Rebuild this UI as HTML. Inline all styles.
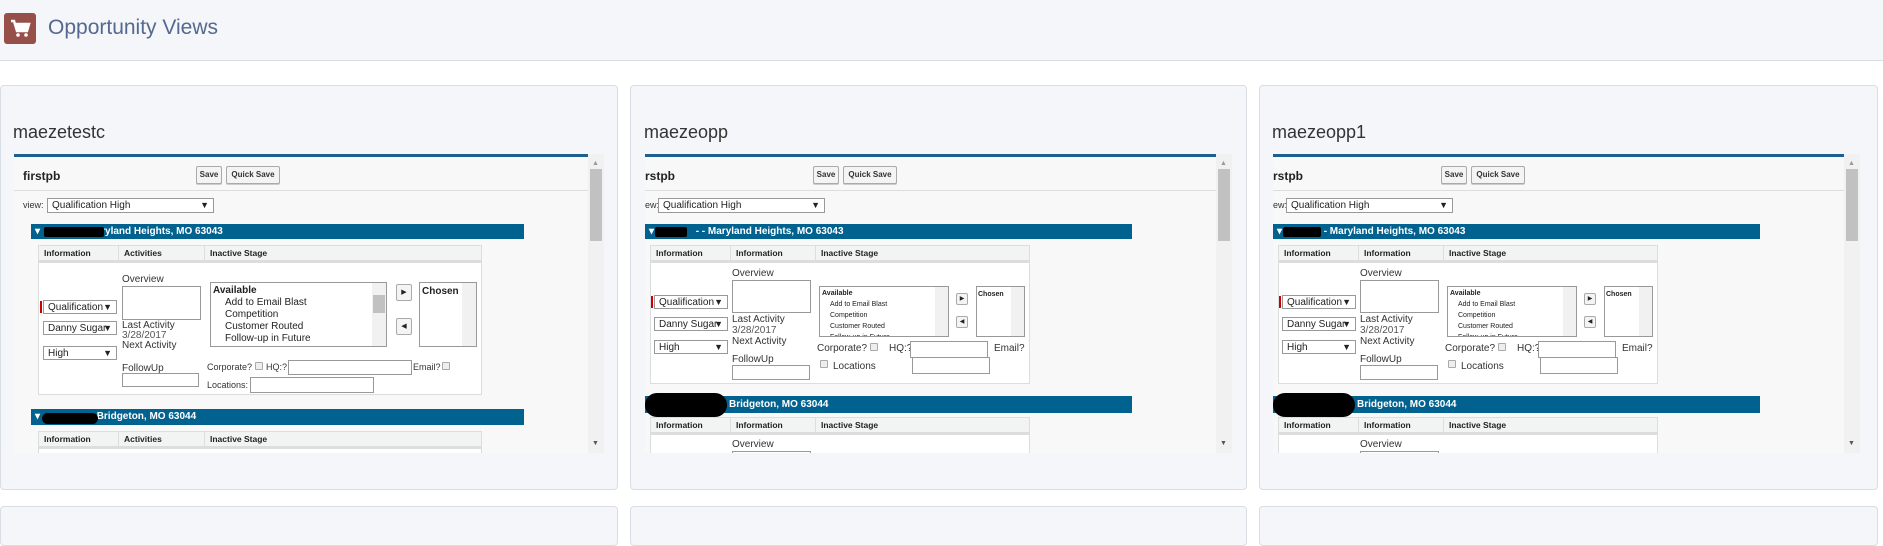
<!DOCTYPE html>
<html><head><meta charset="utf-8"><style>
*{box-sizing:border-box;margin:0;padding:0}
body{width:1883px;height:530px;background:#fff;position:relative;overflow:hidden;font-family:"Liberation Sans",sans-serif;color:#222}
.a{position:absolute}
.hdr{left:0;top:0;width:1883px;height:61px;background:#f4f6f9;border-bottom:1px solid #d8dde6}
.card{background:#f4f6f9;border:1px solid #d8dde6;border-radius:4px}
.ctitle{font-size:18px;color:#333}
.panel{background:#f8f8f8;border-top:3px solid #1d5f8e;overflow:hidden}
.sb{background:#f1f1f1}
.thumb{background:#c1c1c1}
.btn{border:1px solid #aaa;background:#f4f4f4;font-size:8px;font-weight:bold;border-radius:2px;text-align:center;line-height:16px;color:#333;box-shadow:0 1px 0 #ccc}
.bar{background:#02628f;color:#fff;font-weight:bold;font-size:10px;line-height:15px;padding-left:14px;white-space:nowrap}
.tbl{background:#fff;border:1px solid #ddd}
.th{background:#f2f3f3;border-bottom:3px solid #ddd;height:17px}
.thc{font-size:8.5px;font-weight:bold;line-height:14px;padding-left:5px;border-right:1px solid #ddd;height:14px}
.sel{background:#fff;border:1px solid #999;font-size:10px;line-height:13px;padding-left:4px;white-space:nowrap;overflow:hidden}
.sel:after{content:"▼";position:absolute;right:4px;top:0;font-size:9px}
.lbl{font-size:10px;white-space:nowrap;color:#333;line-height:11px}
.box{background:#fff;border:1px solid #999}
.lb{background:#fff;border:1px solid #999;font-size:10px;line-height:13px;overflow:hidden;white-space:nowrap}
.ab{border:1px solid #aaa;background:#f4f4f4;border-radius:2px;font-size:7px;text-align:center}
.cb{width:8px;height:8px;border:1px solid #aaa;background:#eee;border-radius:1px}
.blk{background:#000;border-radius:6px}
</style></head><body>
<div class="a hdr"></div>
<div class="a" style="left:4px;top:13px;width:32px;height:31px;background:#975049;border-radius:3px">
<svg width="32" height="31" viewBox="0 0 32 31"><path d="M7 8h3l3 10h10l2-7H12" fill="none" stroke="#fff" stroke-width="2.5"/><rect x="12" y="11" width="12" height="6" fill="#fff"/><circle cx="14" cy="22" r="1.8" fill="#fff"/><circle cx="22" cy="22" r="1.8" fill="#fff"/></svg></div>
<div class="a" style="left:48px;top:16px;font-size:21px;color:#54698d">Opportunity Views</div>

<div class="a card" style="left:0;top:85px;width:618px;height:405px"></div>
<div class="a card" style="left:630px;top:85px;width:617px;height:405px"></div>
<div class="a card" style="left:1259px;top:85px;width:619px;height:405px"></div>
<div class="a card" style="left:0;top:506px;width:618px;height:40px"></div>
<div class="a card" style="left:630px;top:506px;width:617px;height:40px"></div>
<div class="a card" style="left:1259px;top:506px;width:619px;height:40px"></div>

<div class="a ctitle" style="left:13px;top:122px">maezetestc</div>
<div class="a ctitle" style="left:644px;top:122px">maezeopp</div>
<div class="a ctitle" style="left:1272px;top:122px">maezeopp1</div>

<!-- CARD 1 -->
<div class="a panel" style="left:14px;top:154px;width:574px;height:299px">
 <div class="a" style="left:9px;top:12px;font-size:12px;font-weight:bold">firstpb</div>
 <div class="a btn" style="left:182px;top:9px;width:26px;height:18px">Save</div>
 <div class="a btn" style="left:212px;top:9px;width:54px;height:18px">Quick Save</div>
 <div class="a" style="left:0;top:33px;width:574px;height:1px;background:#ddd"></div>
 <div class="a lbl" style="left:9px;top:43px;font-size:9px">view:</div>
 <div class="a sel" style="left:33px;top:41px;width:167px;height:15px">Qualification High</div>
 <div class="a bar" style="left:17px;top:67px;width:493px;height:15px;padding-left:4px">▾ &nbsp; &nbsp; &nbsp; &nbsp; &nbsp; &nbsp; &nbsp; &nbsp; Maryland Heights, MO 63043</div>
 <div class="a blk" style="left:30px;top:70px;width:60px;height:10px;border-radius:2px"></div>
 <div class="a tbl" style="left:24px;top:88px;width:444px;height:150px">
  <div class="th"><div class="a thc" style="left:0;width:80px">Information</div><div class="a thc" style="left:80px;width:86px">Activities</div><div class="a thc" style="left:166px;width:276px;border:0">Inactive Stage</div></div>
 </div>
 <div class="a" style="left:26px;top:144px;width:2px;height:12px;background:#c00"></div>
 <div class="a sel" style="left:29px;top:143px;width:74px;height:14px">Qualification</div>
 <div class="a sel" style="left:29px;top:164px;width:74px;height:14px">Danny Sugar</div>
 <div class="a sel" style="left:29px;top:189px;width:74px;height:14px">High</div>
 <div class="a lbl" style="left:108px;top:117px">Overview</div>
 <div class="a box" style="left:108px;top:129px;width:79px;height:34px"></div>
 <div class="a lbl" style="left:108px;top:163px">Last Activity</div>
 <div class="a lbl" style="left:108px;top:173px;color:#555">3/28/2017</div>
 <div class="a lbl" style="left:108px;top:183px">Next Activity</div>
 <div class="a lbl" style="left:108px;top:206px">FollowUp</div>
 <div class="a box" style="left:108px;top:216px;width:77px;height:14px"></div>
 <div class="a lb" style="left:196px;top:125px;width:177px;height:65px;padding:1px 0 0 2px"><b>Available</b><div style="padding-left:12px;line-height:12px">Add to Email Blast<br>Competition<br>Customer Routed<br>Follow-up in Future</div></div>
 <div class="a sb" style="left:358px;top:126px;width:14px;height:63px"><div class="a thumb" style="left:1px;top:12px;width:12px;height:18px"></div></div>
 <div class="a ab" style="left:382px;top:127px;width:16px;height:17px;line-height:15px">▶</div>
 <div class="a ab" style="left:382px;top:161px;width:16px;height:17px;line-height:15px">◀</div>
 <div class="a lb" style="left:405px;top:125px;width:58px;height:65px;padding:2px"><b>Chosen</b></div>
 <div class="a sb" style="left:448px;top:126px;width:14px;height:63px"></div>
 <div class="a lbl" style="left:193px;top:205px;font-size:9px">Corporate?</div>
 <div class="a cb" style="left:241px;top:205px"></div>
 <div class="a lbl" style="left:252px;top:205px;font-size:9px">HQ:?</div>
 <div class="a box" style="left:274px;top:203px;width:124px;height:15px"></div>
 <div class="a lbl" style="left:399px;top:205px;font-size:9px">Email?</div>
 <div class="a cb" style="left:428px;top:205px"></div>
 <div class="a lbl" style="left:193px;top:223px;font-size:9px">Locations:</div>
 <div class="a box" style="left:236px;top:220px;width:124px;height:16px"></div>
 <div class="a bar" style="left:17px;top:252px;width:493px;height:16px;padding-left:4px">▾ &nbsp; &nbsp; &nbsp; &nbsp; &nbsp; &nbsp; &nbsp; &nbsp;- - Bridgeton, MO 63044</div>
 <div class="a blk" style="left:28px;top:256px;width:56px;height:11px"></div>
 <div class="a tbl" style="left:24px;top:274px;width:444px;height:40px">
  <div class="th"><div class="a thc" style="left:0;width:80px">Information</div><div class="a thc" style="left:80px;width:86px">Activities</div><div class="a thc" style="left:166px;width:276px;border:0">Inactive Stage</div></div>
 </div>
</div>
<div class="a sb" style="left:588px;top:154px;width:16px;height:299px"><div class="a" style="left:4px;top:6px;font-size:7px;color:#999">▲</div><div class="a thumb" style="left:2px;top:15px;width:12px;height:72px"></div><div class="a" style="left:4px;top:286px;font-size:7px;color:#555">▼</div></div>

<!-- CARD 2 -->
<div class="a" style="left:645px;top:0;width:590px;height:530px">
<div class="a panel" style="left:0;top:154px;width:571px;height:299px">
 <div class="a" style="left:0;top:12px;font-size:12px;font-weight:bold">rstpb</div>
 <div class="a btn" style="left:168px;top:9px;width:26px;height:18px">Save</div>
 <div class="a btn" style="left:198px;top:9px;width:54px;height:18px">Quick Save</div>
 <div class="a" style="left:0;top:33px;width:571px;height:1px;background:#ddd"></div>
 <div class="a lbl" style="left:0;top:43px;font-size:9px">ew:</div>
 <div class="a sel" style="left:13px;top:41px;width:167px;height:15px">Qualification High</div>
 <div class="a bar" style="left:0;top:67px;width:487px;height:15px;padding-left:4px">▾ &nbsp; &nbsp; &nbsp; &nbsp; &nbsp; &nbsp; &nbsp; - - Maryland Heights, MO 63043</div>
 <div class="a blk" style="left:10px;top:70px;width:32px;height:10px;border-radius:2px"></div>
 <div class="a tbl" style="left:5px;top:88px;width:380px;height:139px">
  <div class="th"><div class="a thc" style="left:0;width:80px">Information</div><div class="a thc" style="left:80px;width:85px">Information</div><div class="a thc" style="left:165px;width:213px;border:0">Inactive Stage</div></div>
 </div>
 <div class="a" style="left:6px;top:139px;width:2px;height:12px;background:#c00"></div>
 <div class="a sel" style="left:9px;top:138px;width:74px;height:14px">Qualification</div>
 <div class="a sel" style="left:9px;top:160px;width:74px;height:14px">Danny Sugar</div>
 <div class="a sel" style="left:9px;top:183px;width:74px;height:14px">High</div>
 <div class="a lbl" style="left:87px;top:111px">Overview</div>
 <div class="a box" style="left:87px;top:123px;width:79px;height:33px"></div>
 <div class="a lbl" style="left:87px;top:157px">Last Activity</div>
 <div class="a lbl" style="left:87px;top:168px;color:#555">3/28/2017</div>
 <div class="a lbl" style="left:87px;top:179px">Next Activity</div>
 <div class="a lbl" style="left:87px;top:197px">FollowUp</div>
 <div class="a box" style="left:87px;top:208px;width:78px;height:15px"></div>
 <div class="a lb" style="left:174px;top:129px;width:130px;height:51px;padding:1px 0 0 2px;font-size:7px;line-height:11px"><b>Available</b><div style="padding-left:8px;line-height:11px">Add to Email Blast<br>Competition<br>Customer Routed<br>Follow-up in Future</div></div>
 <div class="a sb" style="left:290px;top:130px;width:13px;height:49px"></div>
 <div class="a ab" style="left:311px;top:136px;width:12px;height:12px;line-height:11px;font-size:6px">▶</div>
 <div class="a ab" style="left:311px;top:159px;width:12px;height:12px;line-height:11px;font-size:6px">◀</div>
 <div class="a lb" style="left:331px;top:129px;width:49px;height:51px;padding:1px;font-size:7px"><b>Chosen</b></div>
 <div class="a sb" style="left:366px;top:130px;width:13px;height:49px"></div>
 <div class="a lbl" style="left:172px;top:186px">Corporate?</div>
 <div class="a cb" style="left:225px;top:186px"></div>
 <div class="a lbl" style="left:244px;top:186px">HQ:?</div>
 <div class="a box" style="left:265px;top:184px;width:78px;height:17px"></div>
 <div class="a lbl" style="left:349px;top:186px">Email?</div>
 <div class="a cb" style="left:175px;top:203px"></div>
 <div class="a lbl" style="left:188px;top:204px">Locations</div>
 <div class="a box" style="left:267px;top:200px;width:78px;height:17px"></div>
 <div class="a bar" style="left:0;top:239px;width:487px;height:17px;padding-left:84px;line-height:17px">Bridgeton, MO 63044</div>
 <div class="a blk" style="left:0;top:236px;width:82px;height:24px;border-radius:12px"></div>
 <div class="a tbl" style="left:5px;top:260px;width:380px;height:50px">
  <div class="th"><div class="a thc" style="left:0;width:80px">Information</div><div class="a thc" style="left:80px;width:85px">Information</div><div class="a thc" style="left:165px;width:213px;border:0">Inactive Stage</div></div>
 </div>
 <div class="a lbl" style="left:87px;top:282px">Overview</div>
 <div class="a box" style="left:87px;top:294px;width:79px;height:20px"></div>
</div>
<div class="a sb" style="left:571px;top:154px;width:16px;height:299px"><div class="a" style="left:4px;top:6px;font-size:7px;color:#999">▲</div><div class="a thumb" style="left:2px;top:15px;width:12px;height:72px"></div><div class="a" style="left:4px;top:286px;font-size:7px;color:#555">▼</div></div>
</div>

<!-- CARD 3 -->
<div class="a" style="left:1273px;top:0;width:590px;height:530px">
<div class="a panel" style="left:0;top:154px;width:571px;height:299px">
 <div class="a" style="left:0;top:12px;font-size:12px;font-weight:bold">rstpb</div>
 <div class="a btn" style="left:168px;top:9px;width:26px;height:18px">Save</div>
 <div class="a btn" style="left:198px;top:9px;width:54px;height:18px">Quick Save</div>
 <div class="a" style="left:0;top:33px;width:571px;height:1px;background:#ddd"></div>
 <div class="a lbl" style="left:0;top:43px;font-size:9px">ew:</div>
 <div class="a sel" style="left:13px;top:41px;width:167px;height:15px">Qualification High</div>
 <div class="a bar" style="left:0;top:67px;width:487px;height:15px;padding-left:4px">▾ &nbsp; &nbsp; &nbsp; &nbsp; &nbsp; &nbsp; &nbsp; - Maryland Heights, MO 63043</div>
 <div class="a blk" style="left:10px;top:70px;width:38px;height:10px;border-radius:2px"></div>
 <div class="a tbl" style="left:5px;top:88px;width:380px;height:139px">
  <div class="th"><div class="a thc" style="left:0;width:80px">Information</div><div class="a thc" style="left:80px;width:85px">Information</div><div class="a thc" style="left:165px;width:213px;border:0">Inactive Stage</div></div>
 </div>
 <div class="a" style="left:6px;top:139px;width:2px;height:12px;background:#c00"></div>
 <div class="a sel" style="left:9px;top:138px;width:74px;height:14px">Qualification</div>
 <div class="a sel" style="left:9px;top:160px;width:74px;height:14px">Danny Sugar</div>
 <div class="a sel" style="left:9px;top:183px;width:74px;height:14px">High</div>
 <div class="a lbl" style="left:87px;top:111px">Overview</div>
 <div class="a box" style="left:87px;top:123px;width:79px;height:33px"></div>
 <div class="a lbl" style="left:87px;top:157px">Last Activity</div>
 <div class="a lbl" style="left:87px;top:168px;color:#555">3/28/2017</div>
 <div class="a lbl" style="left:87px;top:179px">Next Activity</div>
 <div class="a lbl" style="left:87px;top:197px">FollowUp</div>
 <div class="a box" style="left:87px;top:208px;width:78px;height:15px"></div>
 <div class="a lb" style="left:174px;top:129px;width:130px;height:51px;padding:1px 0 0 2px;font-size:7px;line-height:11px"><b>Available</b><div style="padding-left:8px;line-height:11px">Add to Email Blast<br>Competition<br>Customer Routed<br>Follow-up in Future</div></div>
 <div class="a sb" style="left:290px;top:130px;width:13px;height:49px"></div>
 <div class="a ab" style="left:311px;top:136px;width:12px;height:12px;line-height:11px;font-size:6px">▶</div>
 <div class="a ab" style="left:311px;top:159px;width:12px;height:12px;line-height:11px;font-size:6px">◀</div>
 <div class="a lb" style="left:331px;top:129px;width:49px;height:51px;padding:1px;font-size:7px"><b>Chosen</b></div>
 <div class="a sb" style="left:366px;top:130px;width:13px;height:49px"></div>
 <div class="a lbl" style="left:172px;top:186px">Corporate?</div>
 <div class="a cb" style="left:225px;top:186px"></div>
 <div class="a lbl" style="left:244px;top:186px">HQ:?</div>
 <div class="a box" style="left:265px;top:184px;width:78px;height:17px"></div>
 <div class="a lbl" style="left:349px;top:186px">Email?</div>
 <div class="a cb" style="left:175px;top:203px"></div>
 <div class="a lbl" style="left:188px;top:204px">Locations</div>
 <div class="a box" style="left:267px;top:200px;width:78px;height:17px"></div>
 <div class="a bar" style="left:0;top:239px;width:487px;height:17px;padding-left:84px;line-height:17px">Bridgeton, MO 63044</div>
 <div class="a blk" style="left:0;top:236px;width:82px;height:24px;border-radius:12px"></div>
 <div class="a tbl" style="left:5px;top:260px;width:380px;height:50px">
  <div class="th"><div class="a thc" style="left:0;width:80px">Information</div><div class="a thc" style="left:80px;width:85px">Information</div><div class="a thc" style="left:165px;width:213px;border:0">Inactive Stage</div></div>
 </div>
 <div class="a lbl" style="left:87px;top:282px">Overview</div>
 <div class="a box" style="left:87px;top:294px;width:79px;height:20px"></div>
</div>
<div class="a sb" style="left:571px;top:154px;width:16px;height:299px"><div class="a" style="left:4px;top:6px;font-size:7px;color:#999">▲</div><div class="a thumb" style="left:2px;top:15px;width:12px;height:72px"></div><div class="a" style="left:4px;top:286px;font-size:7px;color:#555">▼</div></div>
</div>
</body></html>
